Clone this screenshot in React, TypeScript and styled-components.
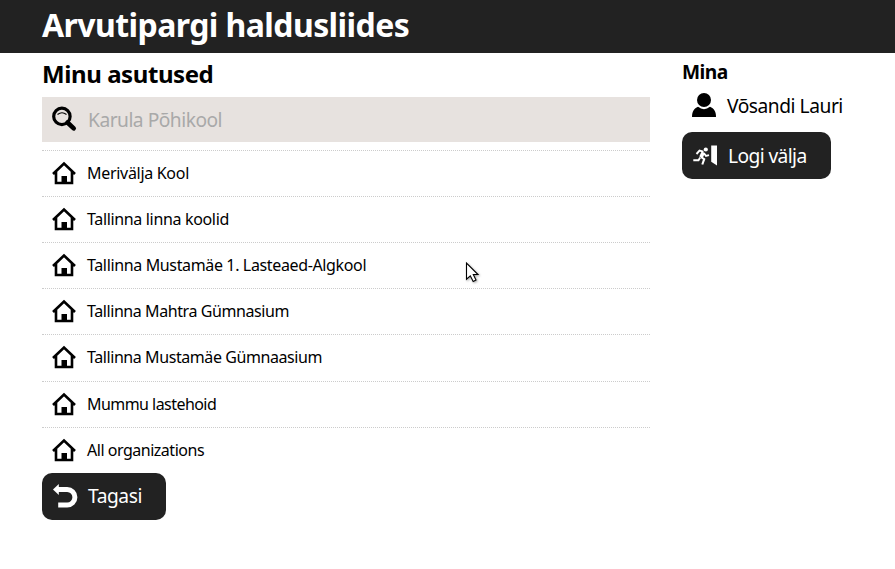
import React from 'react';
import styled, { createGlobalStyle, css } from 'styled-components';

const GlobalStyle = createGlobalStyle`
  * { box-sizing: border-box; }
  body {
    margin: 0;
    background: #fff;
    color: #000;
    font: 16px/22px "Noto Sans", "Open Sans", sans-serif;
    overflow: hidden;
  }
  h1, h2, h3, ul { margin: 0; padding: 0; }
`;

const Page = styled.div`
  position: relative;
  height: 569px;
`;

const Header = styled.header`
  height: 53px;
  padding-left: 42px;
  background: #222;
  color: #fff;
`;

const Title = styled.h1`
  font-size: 32px;
  line-height: 50px;
  letter-spacing: -0.58px;
`;

const Columns = styled.div`
  display: flex;
  gap: 32px;
  padding-left: 42px;
`;

const Main = styled.main`
  width: 608px;
`;

const Heading = styled.h2`
  height: 44px;
  font-size: 24px;
  line-height: 41px;
  letter-spacing: -0.42px;
`;

const SearchBar = styled.label`
  display: flex;
  align-items: center;
  height: 45px;
  padding: 0 10px;
  gap: 12px;
  margin-bottom: 7.82px;
  background: #e7e2df;
`;

const SearchInput = styled.input`
  flex: 1;
  min-width: 0;
  height: 45px;
  padding: 0;
  border: 0;
  outline: 0;
  background: transparent;
  font: 19.2px "Noto Sans", "Open Sans", sans-serif;
  letter-spacing: -0.5px;
  &::placeholder { color: #a9a9a9; opacity: 1; }
`;

const List = styled.ul`
  list-style: none;
`;

const Row = styled.li`
  display: flex;
  align-items: center;
  gap: 11px;
  height: 46.15px;
  padding: 0 0 1px 10px;
  border-top: 1px dotted #ccc;
`;

const Label = styled.span<{ $spacing: number }>`
  letter-spacing: ${p => p.$spacing}px;
  white-space: nowrap;
`;

const Aside = styled.aside`
  width: 180px;
`;

const SideHeading = styled.h3`
  height: 38px;
  font-size: 19.2px;
  line-height: 38px;
  letter-spacing: -0.5px;
`;

const largeItem = css`
  display: flex;
  align-items: center;
  gap: 11px;
  font-size: 19.2px;
`;

const User = styled.div`
  ${largeItem}
  height: 28px;
  margin-bottom: 13px;
  padding-left: 10px;
  ${Label} { padding-top: 2px; }
`;

const Button = styled.button<{ $width: number }>`
  ${largeItem}
  width: ${p => p.$width}px;
  height: 47px;
  padding: 0 0 0 11px;
  border: 0;
  border-radius: 10px;
  background: #222;
  color: #fff;
  font-family: inherit;
`;

const BackButton = styled(Button)`
  ${Label} { padding-bottom: 1px; }
`;

const Icon = styled.svg`
  display: block;
  flex: none;
  width: 24px;
  height: 24px;
  overflow: visible;
`;

const Pointer = styled.svg`
  position: absolute;
  left: 464px;
  top: 261px;
  width: 18px;
  height: 24px;
  filter: drop-shadow(1px 1px 1px rgba(0, 0, 0, 0.35));
`;

const SearchIcon = () => (
  <Icon viewBox="0 0 24 24" fill="none" stroke="#000">
    <circle cx="9.9" cy="8.4" r="8.2" strokeWidth="3.2" />
    <path d="M5.5 6.5Q10 2.9 14.5 6.5" strokeWidth="1.1" />
    <path d="M15.5 14.5L21.7 20.4" strokeWidth="4.6" strokeLinecap="round" />
  </Icon>
);

const HomeIcon = () => (
  <Icon viewBox="0 0 24 24">
    <path d="M1 13L12 2.5L23 13M4 11V22H20V11" fill="none" stroke="#000" strokeWidth="2.6" />
    <path d="M9.5 15H15V22H9.5Z" />
  </Icon>
);

const UserIcon = () => (
  <Icon viewBox="0 0 24 24">
    <circle cx="12" cy="7" r="7" />
    <path d="M0 24C0 18.5 2 15.5 6 13.8Q12 18.5 18 13.8C22 15.5 24 18.5 24 24Z" />
  </Icon>
);

const ExitIcon = () => (
  <Icon viewBox="0 0 24 24" fill="none" stroke="#fff">
    <circle cx="12.8" cy="5.5" r="2.1" fill="#fff" stroke="none" />
    <path d="M3.5 10L6.5 6.6L10.5 7.7M11 9.3L13 12L16 11.2M7.2 13.5L5.5 16.3H.3" strokeWidth="1.9" />
    <path d="M10.3 8.3L8 13.2" strokeWidth="3.8" />
    <path d="M8 13L11.2 15.2L9.3 20.5" strokeWidth="2.1" />
    <path d="M18.2 1.5H24V21.5L18.2 17.8Z" fill="#fff" stroke="none" />
  </Icon>
);

const BackIcon = () => (
  <Icon viewBox="0 0 24 24">
    <path d="M4 5.6H14.2A7.4 7.4 0 0 1 14.2 21H5.2" fill="none" stroke="#fff" strokeWidth="5" />
    <path d="M0 5.5L5.8 0V11Z" fill="#fff" />
  </Icon>
);

const organizations = [
  { name: 'Merivälja Kool', spacing: -0.3 },
  { name: 'Tallinna linna koolid', spacing: -0.34 },
  { name: 'Tallinna Mustamäe 1. Lasteaed-Algkool', spacing: -0.36 },
  { name: 'Tallinna Mahtra Gümnasium', spacing: -0.42 },
  { name: 'Tallinna Mustamäe Gümnaasium', spacing: -0.42 },
  { name: 'Mummu lastehoid', spacing: -0.55 },
  { name: 'All organizations', spacing: -0.48 },
];

export default function App() {
  return (
    <Page>
      <GlobalStyle />
      <Header><Title>Arvutipargi haldusliides</Title></Header>
      <Columns>
        <Main>
          <Heading>Minu asutused</Heading>
          <SearchBar>
            <SearchIcon />
            <SearchInput placeholder="Karula Põhikool" />
          </SearchBar>
          <List>
            {organizations.map(o => (
              <Row key={o.name}>
                <HomeIcon />
                <Label $spacing={o.spacing}>{o.name}</Label>
              </Row>
            ))}
          </List>
          <BackButton $width={124}><BackIcon /><Label $spacing={-0.45}>Tagasi</Label></BackButton>
        </Main>
        <Aside>
          <SideHeading>Mina</SideHeading>
          <User><UserIcon /><Label $spacing={-0.46}>Võsandi Lauri</Label></User>
          <Button $width={149}><ExitIcon /><Label $spacing={-0.6}>Logi välja</Label></Button>
        </Aside>
      </Columns>
      <Pointer viewBox="0 0 18 24">
        <path d="M2.5 2V18.2L6.3 14.8L9.2 20.4L12 19L9.3 13.5H14Z" fill="#fff" stroke="#000" strokeWidth="1.1" />
      </Pointer>
    </Page>
  );
}
